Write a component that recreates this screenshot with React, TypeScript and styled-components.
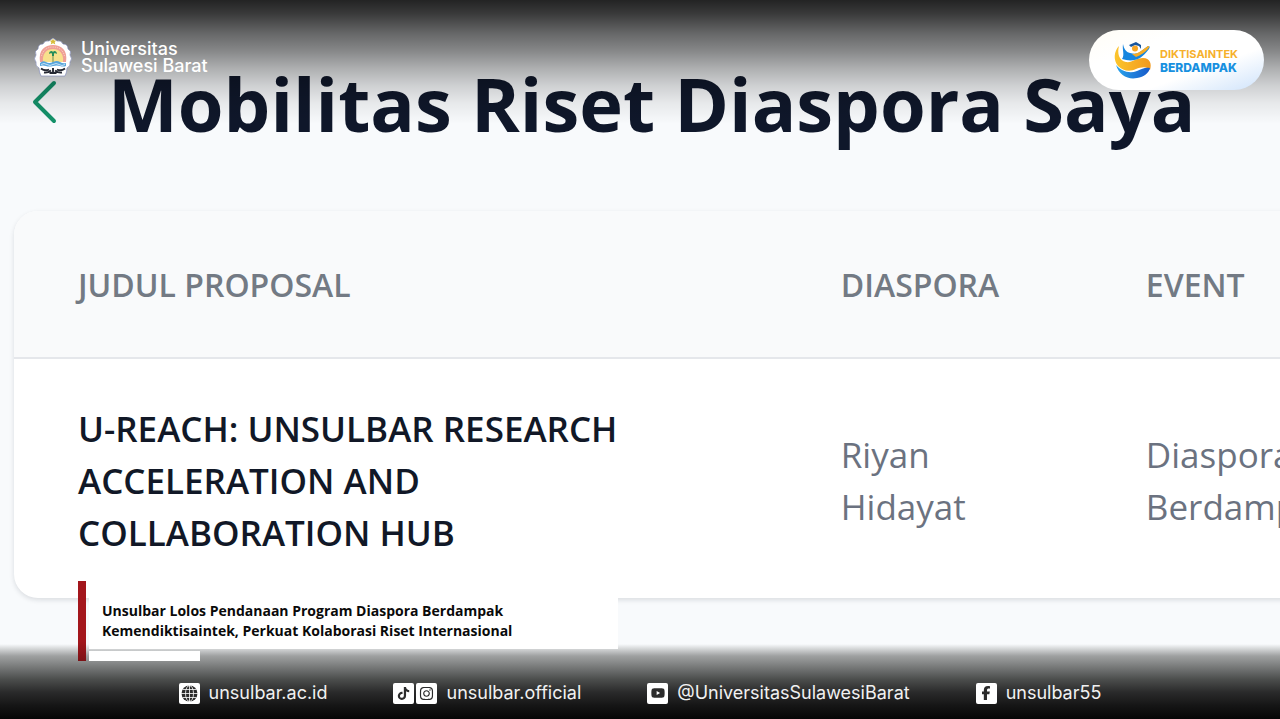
import React from "react";
import styled, { createGlobalStyle } from "styled-components";
import { FaFacebookF, FaInstagram, FaTiktok, FaYoutube } from "react-icons/fa6";

const GlobalStyle = createGlobalStyle`
  *, *::before, *::after { box-sizing: border-box; }
  body { margin: 0; background: #f8fafc; }
`;

const segoeLike = `"Open Sans", "Noto Sans", sans-serif`;
const geometric = `Inter, "Liberation Sans", sans-serif`;

const Page = styled.div`
  position: relative;
  min-height: 100vh;
  overflow: hidden;
  background: #f8fafc;
  font-family: ${segoeLike};
`;

const Main = styled.main`
  padding: 48px 0 100px 14px;
`;

const TitleRow = styled.div`
  display: flex;
  align-items: center;
  gap: 47px;
  padding-left: 16px;
  margin-bottom: 51px;
`;

const BackButton = styled.button`
  display: flex;
  flex: none;
  padding: 0 0 4px;
  border: 0;
  background: none;
  cursor: pointer;
`;

const Title = styled.h1`
  margin: 0;
  color: #0f172a;
  font-size: 74px;
  font-weight: 700;
  line-height: 112px;
  white-space: nowrap;
`;

const Card = styled.section`
  width: 120.5%;
  border-radius: 24px;
  background: #fff;
  box-shadow: 0 2px 5px rgba(15, 23, 42, 0.13);
  overflow: hidden;
`;

const Table = styled.table`
  width: 100%;
  table-layout: fixed;
  border-collapse: collapse;
  text-align: left;
`;

const HeadCell = styled.th<{ $width: string }>`
  width: ${(p) => p.$width};
  padding: 50px 64px 48px;
  border-bottom: 2px solid #e5e7eb;
  background: #f9fafb;
  color: #737a84;
  font-size: 32px;
  font-weight: 600;
  line-height: 48px;
`;

const Cell = styled.td<{ $strong?: boolean }>`
  padding: 44px 64px 39px;
  color: ${(p) => (p.$strong ? "#111827" : "#6b7280")};
  font-size: 35px;
  font-weight: ${(p) => (p.$strong ? 600 : 400)};
  line-height: 52px;
`;

const TopBar = styled.header`
  position: absolute;
  inset: 0 0 auto;
  display: flex;
  justify-content: space-between;
  align-items: flex-start;
  height: 124px;
  padding: 30px 16px 0 33px;
  background: linear-gradient(
    rgba(0, 0, 0, 0.86),
    rgba(0, 0, 0, 0.77) 11%,
    rgba(0, 0, 0, 0.59) 27%,
    rgba(0, 0, 0, 0.46) 41%,
    rgba(0, 0, 0, 0.3) 55%,
    rgba(0, 0, 0, 0.17) 69%,
    rgba(0, 0, 0, 0.07) 83%,
    rgba(0, 0, 0, 0)
  );
`;

const Brand = styled.div`
  display: flex;
  align-items: center;
  gap: 8px;
  padding-top: 7px;
  color: #fff;
  font-family: ${geometric};
  font-size: 18px;
  font-weight: 500;
  line-height: 17px;
`;

const Badge = styled.div`
  display: flex;
  align-items: center;
  gap: 7px;
  height: 60px;
  padding: 0 26px 0 24px;
  border-radius: 30px;
  background: linear-gradient(160deg, #fffdf6, #fff 30%, #fff 65%, #cfe3fb);
`;

const BadgeText = styled.div`
  display: flex;
  flex-direction: column;
  padding-top: 2px;
  color: #1890e0;
  font-family: ${geometric};
  font-size: 12px;
  font-weight: 800;
  line-height: 13px;
`;

const BadgeTop = styled.span`
  color: #f6b02c;
  font-size: 11px;
  font-weight: 700;
`;

const Caption = styled.aside`
  position: absolute;
  bottom: 58px;
  left: 78px;
  display: flex;
  gap: 3px;
`;

const CaptionRule = styled.div`
  width: 8px;
  background: linear-gradient(#a3161c 75%, #7c1216);
`;

const CaptionBody = styled.div`
  display: flex;
  flex-direction: column;
  gap: 2px;
  padding-top: 10px;
`;

const CaptionText = styled.p`
  width: 529px;
  margin: 0;
  padding: 10px 100px 8px 13px;
  background: #fff;
  color: #0a0a0a;
  font-size: 14px;
  font-weight: 700;
  line-height: 20px;
  white-space: nowrap;
`;

const CaptionAccent = styled.div`
  width: 111px;
  height: 10px;
  background: #fff;
`;

const Footer = styled.footer`
  position: absolute;
  inset: auto 0 0;
  display: flex;
  justify-content: center;
  align-items: flex-end;
  gap: 66px;
  height: 75px;
  padding-bottom: 14px;
  background: linear-gradient(
    rgba(12, 14, 12, 0),
    rgba(12, 14, 12, 0.38) 16%,
    rgba(12, 14, 12, 0.56) 32%,
    rgba(12, 14, 12, 0.73) 47%,
    rgba(12, 12, 12, 0.87) 64%,
    rgba(12, 12, 12, 0.96) 82%,
    #060606
  );
`;

const FooterLink = styled.a`
  display: flex;
  align-items: center;
  gap: 9px;
  color: #f1f1f1;
  font-family: ${geometric};
  font-size: 18px;
  line-height: 24px;
  text-decoration: none;
`;

const Tiles = styled.span`
  display: flex;
  gap: 2px;
`;

const Tile = styled.span`
  display: grid;
  place-items: center;
  width: 21px;
  height: 21px;
  border-radius: 2px;
  background: #fff;
  color: #2b2b2b;
`;

const Chevron = () => (
  <svg width="31" height="44" viewBox="0 0 31 44" fill="none" stroke="#14926a" strokeWidth="4" strokeLinecap="round" strokeLinejoin="round">
    <path d="M24 3 5 22l19 19" />
  </svg>
);

const Crest = () => (
  <svg width="40" height="40" viewBox="0 0 40 40">
    <path
      d="M20 1l4 3q4-1 6 3 5 0 5 5 4 2 2 6 3 4 0 7 1 4-3 6 0 4-2 8H8q-2-4-2-8-4-2-3-6-3-3 0-7-2-4 2-6 0-5 5-5 2-4 6-3z"
      fill="#fff"
      stroke="#7883b5"
      strokeWidth="0.6"
      strokeLinejoin="round"
    />
    <path d="M7 25C5 13 12 8 20 8s15 5 13 17z" fill="#ef9f97" />
    <path d="M10 25c-1-9 4-13 10-13s11 4 10 13z" fill="#f8e08c" />
    <path d="M8.500 19C10 13 14 10 20 10s10 3 11.500 9" fill="none" stroke="#f7d9c4" strokeWidth="0.8" strokeDasharray="1.200 1" />
    <path d="M20 1.500l1 2h2.200l-1.500 1.700.6 2.300-2.300-1.200-2.300 1.200.6-2.300-1.500-1.700H19z" fill="#d8bd3d" />
    <path d="M20 16v11" stroke="#6b8f50" strokeWidth="1" />
    <path d="M16 17c0-3 3-4 4-2 1-2 4-1 4 2-1-1-2-1-3-.5V19h-2v-2.500c-1-.5-2-.5-3 .5z" fill="#268d5a" />
    <path d="M7 26q3-3 6-1t7 0 7 0 6 1v3q-3 1-6 0t-7 0-7 0-6 0z" fill="#57a5dc" />
    <path d="M8 27.500q3-2 6 0t6 0 6 0 6 0" fill="none" stroke="#e4f2fb" strokeWidth="0.800" />
    <path d="M8 31.500q4 3 8 1m16-1q-4 3-8 1M11 35.500q4 .5 7-2m11 2q-4 .5-7-2M20 31v5m-3.500 0h7" fill="none" stroke="#252833" strokeWidth="1.900" />
  </svg>
);

const DiktiMark = () => (
  <svg width="40" height="40" viewBox="0 0 40 40">
    <defs>
      <linearGradient id="gold" x1="0" y1="0" x2="1" y2="0">
        <stop offset="0" stopColor="#fcc52c" />
        <stop offset="1" stopColor="#f2991d" />
      </linearGradient>
      <linearGradient id="blue" x1="0" y1="0" x2="1" y2="0">
        <stop offset="0" stopColor="#2aa5ec" />
        <stop offset="1" stopColor="#1759c9" />
      </linearGradient>
    </defs>
    <path
      d="M6 6C1 11 0 20 5 26c5 5 12 6 18 3 5-2 11-3 14 1 2-6 0-12-7-12-7 0-11 5-17 4C6 21 4 13 6 6z"
      fill="url(#gold)"
    />
    <path d="M3 25c3 10 12 15 21 13 7-1 12-5 13-10-5-1-8 1-13 3-8 3-16 0-21-6z" fill="url(#blue)" />
    <path d="M10 4c1 5 3 8 7 9 4 1 7 1 10-1l8-6c2 0 2 1 1 3-3 4-6 7-9 9-5 3-12 3-18 1 3-4 0-9 1-15z" fill="#1686df" />
    <path d="M19 14c4 0 6-1 9-3l7-5c2 0 1 2 0 3-4 4-7 6-12 8z" fill="#f7ac24" />
    <circle cx="22" cy="8.500" r="3" fill="#f7a624" />
    <path d="M16 5l7-3 5 3v4l-2-3-4-1-4 2z" fill="#17559d" />
  </svg>
);

const Globe = () => (
  <svg width="17" height="17" viewBox="0 0 17 17">
    <circle cx="8.500" cy="8.500" r="8" fill="#2b2b2b" />
    <g fill="none" stroke="#fff" strokeWidth="0.8">
      <path d="M8.500 0v17M0 8.500h17M1.500 4.500h14M1.500 12.500h14" />
      <ellipse cx="8.500" cy="8.500" rx="4" ry="8" />
    </g>
  </svg>
);

const columns = [
  { label: "JUDUL PROPOSAL", width: "50%" },
  { label: "DIASPORA", width: "20%" },
  { label: "EVENT", width: "30%" },
];

const links = [
  { label: "unsulbar.ac.id", href: "#web", icons: [<Globe key="web" />] },
  {
    label: "unsulbar.official",
    href: "#official",
    icons: [<FaTiktok key="tiktok" size={13} />, <FaInstagram key="instagram" size={15} />],
  },
  { label: "@UniversitasSulawesiBarat", href: "#youtube", icons: [<FaYoutube key="youtube" size={14} />] },
  { label: "unsulbar55", href: "#facebook", icons: [<FaFacebookF key="facebook" size={14} />] },
];

export default function App() {
  return (
    <Page>
      <GlobalStyle />
      <Main>
        <TitleRow>
          <BackButton type="button" aria-label="Kembali">
            <Chevron />
          </BackButton>
          <Title>Mobilitas Riset Diaspora Saya</Title>
        </TitleRow>
        <Card>
          <Table>
            <thead>
              <tr>
                {columns.map((c) => (
                  <HeadCell key={c.label} scope="col" $width={c.width}>
                    {c.label}
                  </HeadCell>
                ))}
              </tr>
            </thead>
            <tbody>
              <tr>
                <Cell $strong>U-REACH: UNSULBAR RESEARCH ACCELERATION AND COLLABORATION HUB</Cell>
                <Cell>Riyan Hidayat</Cell>
                <Cell>
                  Diaspora
                  <br />
                  Berdampak
                </Cell>
              </tr>
            </tbody>
          </Table>
        </Card>
      </Main>
      <TopBar>
        <Brand>
          <Crest />
          <span>
            Universitas
            <br />
            Sulawesi Barat
          </span>
        </Brand>
        <Badge>
          <DiktiMark />
          <BadgeText>
            <BadgeTop>DIKTISAINTEK</BadgeTop>
            <span>BERDAMPAK</span>
          </BadgeText>
        </Badge>
      </TopBar>
      <Footer>
        {links.map((l) => (
          <FooterLink key={l.label} href={l.href}>
            <Tiles>
              {l.icons.map((icon, i) => (
                <Tile key={i}>{icon}</Tile>
              ))}
            </Tiles>
            {l.label}
          </FooterLink>
        ))}
      </Footer>
      <Caption>
        <CaptionRule />
        <CaptionBody>
          <CaptionText>
            Unsulbar Lolos Pendanaan Program Diaspora Berdampak
            <br />
            Kemendiktisaintek, Perkuat Kolaborasi Riset Internasional
          </CaptionText>
          <CaptionAccent />
        </CaptionBody>
      </Caption>
    </Page>
  );
}
